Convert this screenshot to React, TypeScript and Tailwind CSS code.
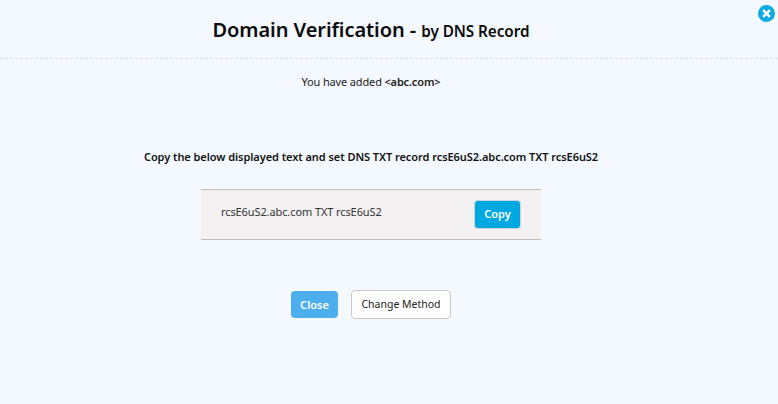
export default function App() {
  const font = { fontFamily: '"Noto Sans", sans-serif' };
  return (
    <div style={font} className="relative w-[778px] h-[404px] overflow-hidden bg-[#f4f9ff] text-[#111]">
      <button className="absolute right-[3px] top-[5px] w-[17px] h-[17px] rounded-full bg-[#0eabe2] flex items-center justify-center">
        <svg width="9" height="9" viewBox="0 0 9 9"><path d="M1.2 1.2L7.8 7.8M7.8 1.2L1.2 7.8" stroke="#fff" strokeWidth="2.6" /></svg>
      </button>
      <header className="h-[59px] border-b border-dashed border-[#d9e0e5] pt-[20px]">
        <div className="w-[742px] text-center">
          <h1 className="font-semibold text-[20px] leading-5 text-[#0b0b0b] tracking-[-0.07px]">
            Domain Verification - <span className="text-[15.3px]">by DNS Record</span>
          </h1>
        </div>
      </header>
      <div className="w-[742px]">
        <p className="text-[11px] leading-4 text-center mt-[15px] text-[#222] tracking-[-0.15px]">
          You have added <b className="font-semibold">&lt;abc.com&gt;</b>
        </p>
        <p className="text-[11px] leading-4 text-center mt-[59px] font-semibold tracking-[-0.06px]">
          Copy the below displayed text and set DNS TXT record rcsE6uS2.abc.com TXT rcsE6uS2
        </p>
        <div className="mt-[24px] mx-auto w-[340px] h-[51px] bg-[#f3f1f2] border-y border-[#c5bdb9] flex items-center justify-between px-[20px]">
          <span className="text-[11px] text-[#333] tracking-[-0.1px] -mt-[5px]">rcsE6uS2.abc.com TXT rcsE6uS2</span>
          <button className="w-[47px] h-[29px] rounded-[4px] bg-[#00a8e1] border border-[#c8d4da] text-white text-[11px] font-semibold">Copy</button>
        </div>
        <div className="mt-[50px] flex justify-center items-center gap-[13px]">
          <button className="w-[47px] h-[27px] rounded-[4px] bg-[#4daeee] text-white text-[11px] font-semibold pt-[1px]">Close</button>
          <button className="w-[100px] h-[29px] rounded-[4px] bg-white border border-[#c9c9c9] text-[#222] text-[10.5px]">Change Method</button>
        </div>
      </div>
    </div>
  );
}
